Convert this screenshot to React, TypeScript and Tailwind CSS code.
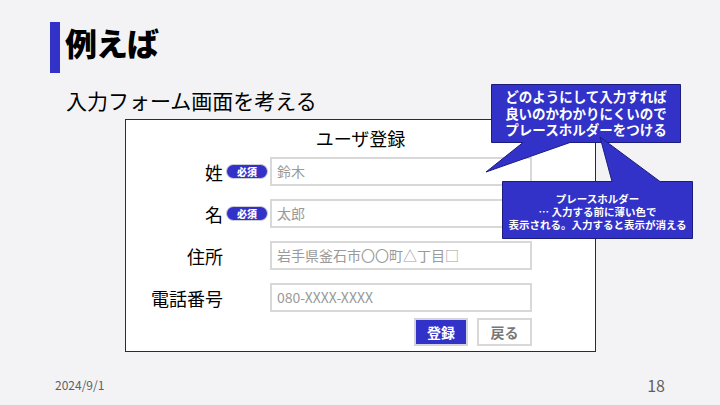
import React from 'react';

const fields = [
  { label: '姓', required: true, placeholder: '鈴木' },
  { label: '名', required: true, placeholder: '太郎' },
  { label: '住所', required: false, placeholder: '岩手県釜石市〇〇町△丁目□' },
  { label: '電話番号', required: false, placeholder: '080-XXXX-XXXX' },
];

export default function App() {
  return (
    <div
      className="relative w-[720px] h-[405px] overflow-hidden bg-[#f3f3f6] flex flex-col text-black"
      style={{ fontFamily: '"Noto Sans CJK JP", "Noto Sans", sans-serif' }}
    >
      {/* heading */}
      <div className="flex items-start pt-[22px] pl-[50px]">
        <div className="w-[10px] h-[51px] bg-[#3232c8]" />
        <div className="ml-[5px] mt-[4px] text-[32px] leading-none font-black tracking-[-1px]">例えば</div>
      </div>
      <div className="ml-[66px] mt-[17px] text-[21px] leading-none">入力フォーム画面を考える</div>

      {/* form mock */}
      <div className="ml-[125px] mt-[8px] w-[471px] h-[233px] border border-[#20208a] bg-white flex flex-col">
        <div className="h-[37px] self-center flex items-center text-[18px]">ユーザ登録</div>
        <div className="flex flex-col items-start gap-[13px]">
          {fields.map((f) => (
            <div key={f.label} className="flex items-center h-[29px]">
              <div className="w-[97px] text-right text-[18px] leading-none">{f.label}</div>
              <div className="w-[42px] ml-[3px] flex">
                {f.required && (
                  <span className="w-[42px] h-[15px] rounded-full bg-[#3232c8] border-[1.5px] border-[#cfcfd8] flex items-center justify-center text-white text-[10px] font-black leading-none">
                    必須
                  </span>
                )}
              </div>
              <div className="ml-[2px] w-[262px] h-[29px] border-2 border-[#d8d8d8] bg-white flex items-center pl-[5px] text-[14px] text-[#9a9a9a]">
                <span>{f.placeholder}</span>
              </div>
            </div>
          ))}
        </div>
        <div className="flex gap-[9px] mt-[6px] ml-[288px]">
          <div className="w-[54px] h-[28px] border-2 border-[#d4d4dc] bg-[#3232c8] flex items-center justify-center text-white text-[14px] font-bold">
            登録
          </div>
          <div className="w-[55px] h-[28px] border-2 border-[#d8d8d8] bg-white flex items-center justify-center text-[#777] text-[14px] font-bold">
            戻る
          </div>
        </div>
      </div>

      {/* footer */}
      <div className="mt-auto mb-[12px] h-[16px] flex items-center justify-between px-[55px] text-[#5f5f5f]">
        <span className="text-[12px]">2024/9/1</span>
        <span className="text-[16px]">18</span>
      </div>

      {/* callouts */}
      <svg className="absolute inset-0 pointer-events-none" width="720" height="405" viewBox="0 0 720 405">
        <path
          d="M491.5 84.5 H680.5 V142.5 H570 L486 172 L523 142.5 H491.5 Z"
          fill="#3232c8"
          stroke="#1c1c7c"
          strokeWidth="1"
        />
        <path
          d="M502.5 181.5 H612 L600 137 L660 181.5 H692.5 V238.5 H502.5 Z"
          fill="#3232c8"
          stroke="#1c1c7c"
          strokeWidth="1"
        />
      </svg>
      <div className="absolute left-[491px] top-[84px] w-[190px] h-[58px] flex flex-col items-center justify-center text-white text-[13.5px] leading-[16.5px] font-bold">
        <span>どのようにして入力すれば</span>
        <span>良いのかわかりにくいので</span>
        <span>プレースホルダーをつける</span>
      </div>
      <div className="absolute left-[502px] top-[181px] w-[191px] h-[58px] flex flex-col items-center justify-center pt-[2px] text-white text-[10.5px] leading-[13px] font-bold">
        <span>プレースホルダー</span>
        <span>… 入力する前に薄い色で</span>
        <span>表示される。入力すると表示が消える</span>
      </div>
    </div>
  );
}
